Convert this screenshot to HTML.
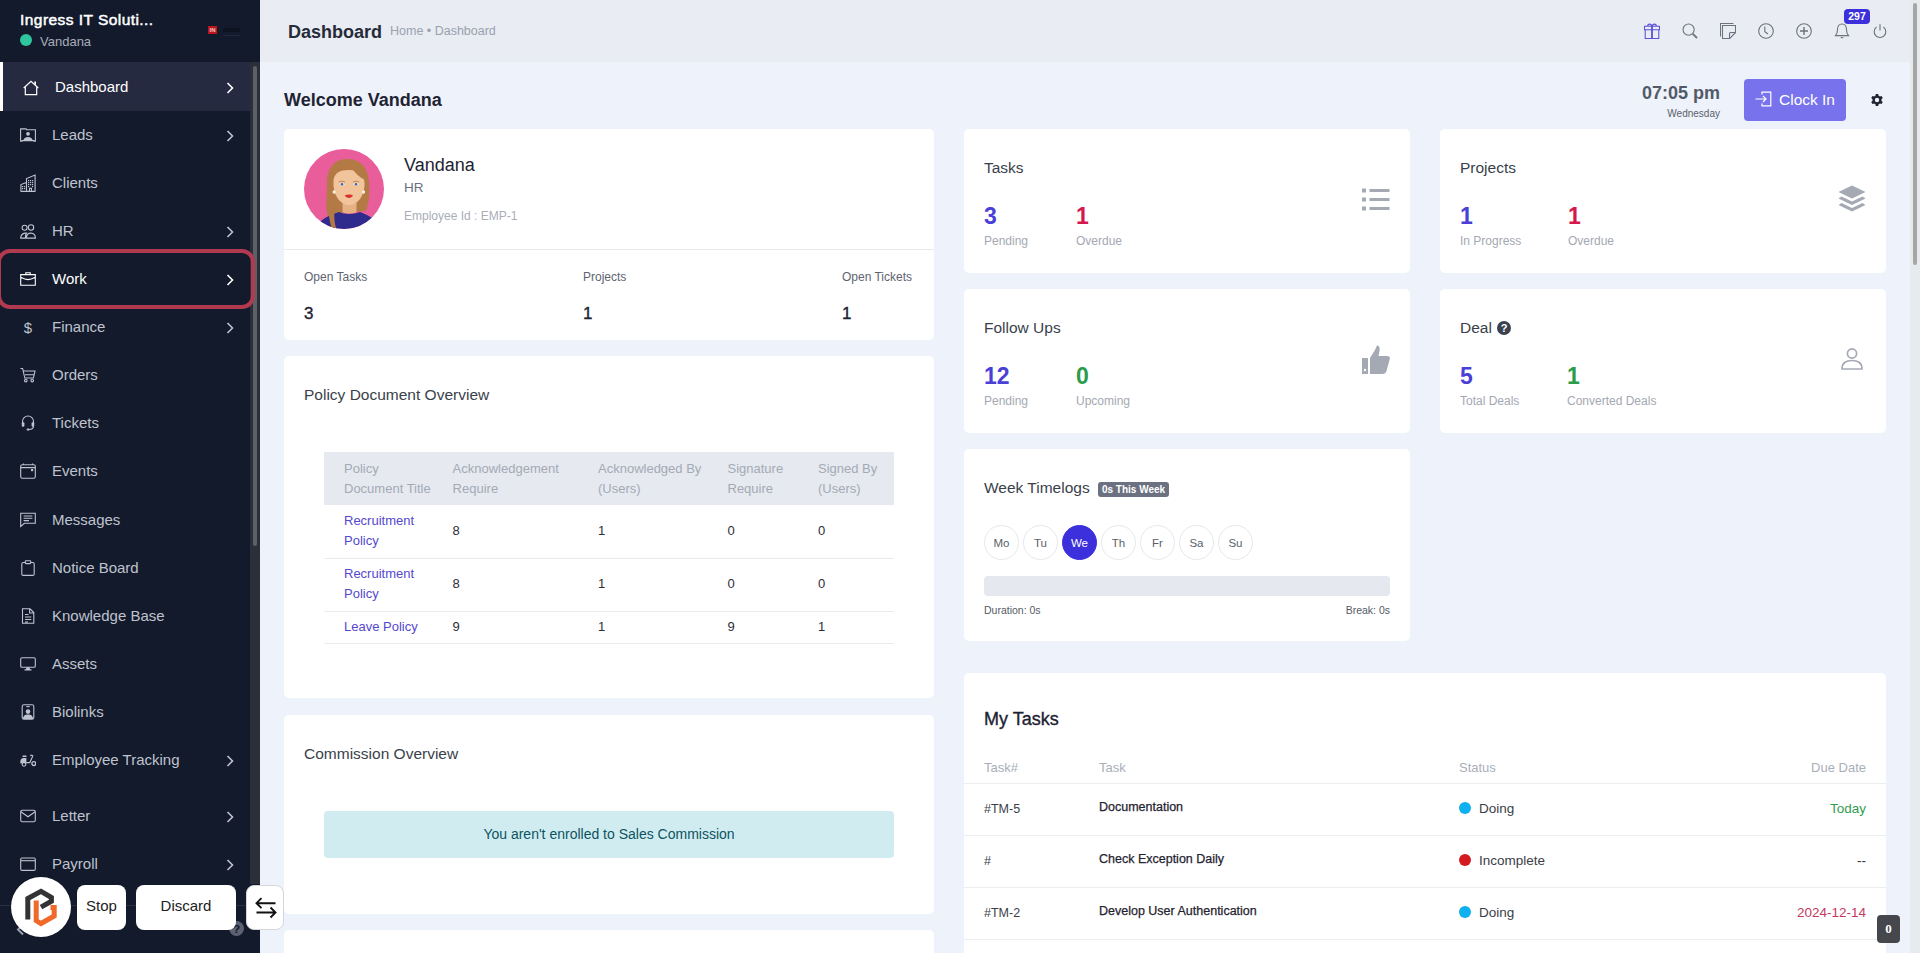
<!DOCTYPE html>
<html><head><meta charset="utf-8">
<style>
*{box-sizing:border-box;margin:0;padding:0}
html,body{width:1920px;height:953px;overflow:hidden}
body{font-family:"Liberation Sans",sans-serif;background:#eef2fb;position:relative;color:#28292f}
.abs{position:absolute}
#sb{position:absolute;left:0;top:0;width:260px;height:953px;background:#131a2b}
#sbtrack{position:absolute;left:250px;top:62px;width:10px;height:822px;background:#2b2f3a}
#sbthumb{position:absolute;left:253px;top:66px;width:4px;height:480px;background:#5d6066;border-radius:2px}
.mi{position:absolute;left:0;width:250px;height:48px;color:#bfc3cf;font-size:15px}
.mi .ic{position:absolute;left:20px;top:calc(50% + 1px);transform:translateY(-50%);width:16px;height:auto}
.mi .tx{position:absolute;left:52px;top:16px;line-height:18px}
.mi .ch{position:absolute;left:226px;top:20px}
.mi .ic svg{display:block}
.mi.act{background:#262a41;color:#fff;height:49px}
.mi.act::before{content:"";position:absolute;left:0;top:0;width:3px;height:100%;background:#fff}
.mi.act .tx{left:55px}
.mi.act .ic{left:23px}
.mi.wk{color:#fff}
#hdr{position:absolute;left:260px;top:0;width:1660px;height:62px;background:#e9ecf2}
.card{position:absolute;background:#fff;border-radius:5px}
#pscroll{position:absolute;left:1910px;top:0;width:10px;height:953px;background:#e7eaef}
#pthumb{position:absolute;left:1913px;top:3px;width:4px;height:262px;background:#a6a6a6;border-radius:2px}
.ttl{font-size:15.5px;color:#3a3f4b;line-height:18px;white-space:nowrap}
.th{font-size:13px;color:#a4a9b5;line-height:20px;white-space:nowrap}
.tl{font-size:13px;color:#5448d0;line-height:20px;white-space:nowrap}
.td{font-size:13px;color:#2a2e38;line-height:20px}
.num{font-size:23px;font-weight:bold;line-height:24px}
.lbl{font-size:12px;color:#a4a8b2;line-height:14px;white-space:nowrap}
.day{width:35px;height:35px;border-radius:50%;border:1px solid #e6e8ee;text-align:center;line-height:34px;font-size:11.5px;color:#5a5f6b}
.tkh{font-size:13px;color:#a9aeb9;line-height:16px}
.tkc{font-size:12.5px;color:#3a3e48;line-height:18px}
.tkn{font-size:12.5px;font-weight:500;color:#1f2330;-webkit-text-stroke:0.25px #1f2330;line-height:18px;white-space:nowrap}
.tks{font-size:13.5px;color:#3a3e48;line-height:18px;white-space:nowrap}
.btn{background:#fff;border-radius:8px;color:#222;font-size:15px;text-align:center;line-height:42px}
</style></head><body>
<div id="sb">
  <div class="abs" style="left:20px;top:10px;font-size:15.5px;color:#fff;line-height:20px;letter-spacing:0.45px;-webkit-text-stroke:0.5px #fff">Ingress IT Soluti...</div>
  <div class="abs" style="left:20px;top:34px;width:12px;height:12px;border-radius:50%;background:#2fc59f"></div>
  <div class="abs" style="left:40px;top:34px;font-size:13px;color:#a9adb9;line-height:16px">Vandana</div>
  <div class="mi act" style="top:62px"><span class="ic"><svg viewBox="0 0 16 16" width="16" height="16"><path fill="none" stroke="currentColor" stroke-width="1.2" d="M0.7 8 L8 1.2 L15.3 8 M2.3 6.6 V14.6 H13.7 V6.6"/><path fill="currentColor" d="M11.3 1.5 H13 V5.2 L11.3 3.7 Z"/></svg></span><span class="tx">Dashboard</span><svg class="ch" viewBox="0 0 8 12" width="8" height="12"><path d="M1.5 1 L6.5 6 L1.5 11" fill="none" stroke="currentColor" stroke-width="1.6"/></svg></div>
<div class="mi" style="top:110px"><span class="ic"><svg viewBox="0 0 16 14" width="16" height="14"><path fill="none" stroke="currentColor" stroke-width="1.1" d="M0.6 13.2 V0.9 H6 L6.6 1.7 H15.4 V13.2 H14 V12.6 H2 V13.2 Z"/><circle cx="8" cy="5.8" r="1.9" fill="currentColor"/><path fill="currentColor" d="M3.2 12.4 C4 9.8 6 9 8 9 C10 9 12 9.8 12.8 12.4 Z"/></svg></span><span class="tx">Leads</span><svg class="ch" viewBox="0 0 8 12" width="8" height="12"><path d="M1.5 1 L6.5 6 L1.5 11" fill="none" stroke="currentColor" stroke-width="1.6"/></svg></div>
<div class="mi" style="top:158px"><span class="ic"><svg viewBox="0 0 16 18" width="16" height="18"><path fill="none" stroke="currentColor" stroke-width="1.1" d="M0.6 17.4 H15.4 M0.9 17.4 V10.6 L6.5 8.6 M6.5 17.4 V4.6 L15.1 1 V17.4 M9.5 17.4 V14.4 H11.5 V17.4"/><g fill="currentColor"><rect x="2" y="12" width="1.2" height="1.2"/><rect x="4" y="12" width="1.2" height="1.2"/><rect x="2" y="14" width="1.2" height="1.2"/><rect x="4" y="14" width="1.2" height="1.2"/><rect x="8" y="6" width="1.2" height="1.2"/><rect x="10" y="6" width="1.2" height="1.2"/><rect x="12" y="6" width="1.2" height="1.2"/><rect x="8" y="8" width="1.2" height="1.2"/><rect x="10" y="8" width="1.2" height="1.2"/><rect x="12" y="8" width="1.2" height="1.2"/><rect x="8" y="10" width="1.2" height="1.2"/><rect x="10" y="10" width="1.2" height="1.2"/><rect x="12" y="10" width="1.2" height="1.2"/><rect x="8" y="12" width="1.2" height="1.2"/><rect x="12" y="12" width="1.2" height="1.2"/></g></svg></span><span class="tx">Clients</span></div>
<div class="mi" style="top:206px"><span class="ic"><svg viewBox="0 0 16 16" width="16" height="16" style="margin-top:1px"><circle fill="none" stroke="currentColor" stroke-width="1.1" cx="4.6" cy="4.2" r="2.5"/><circle fill="none" stroke="currentColor" stroke-width="1.1" cx="11" cy="4" r="2.7"/><path fill="none" stroke="currentColor" stroke-width="1.1" d="M0.7 14.6 C0.7 11.8 2.4 10 5.2 9.6 L6.4 9.6 C5.6 10.8 5.4 12.4 5.4 14.6 Z M6.4 14.6 H15.4 C15.4 11.6 13.5 9.6 11 9.6 C8.4 9.6 6.4 11.6 6.4 14.6 Z"/></svg></span><span class="tx">HR</span><svg class="ch" viewBox="0 0 8 12" width="8" height="12"><path d="M1.5 1 L6.5 6 L1.5 11" fill="none" stroke="currentColor" stroke-width="1.6"/></svg></div>
<div class="mi wk" style="top:254px"><span class="ic"><svg viewBox="0 0 16 14" width="16" height="14"><path fill="none" stroke="currentColor" stroke-width="1.1" d="M0.7 2.6 H15.3 V13.3 H0.7 Z M5.8 2.6 V0.8 H10.2 V2.6 M0.7 5.2 C4 7 6 7.6 8 7.6 C10 7.6 12 7 15.3 5.2"/></svg></span><span class="tx">Work</span><svg class="ch" viewBox="0 0 8 12" width="8" height="12"><path d="M1.5 1 L6.5 6 L1.5 11" fill="none" stroke="currentColor" stroke-width="1.6"/></svg></div>
<div class="mi" style="top:302px"><span class="ic"><svg viewBox="0 0 16 16" width="16" height="16"><text x="8" y="14" text-anchor="middle" font-family="Liberation Sans" font-size="15" fill="currentColor">$</text></svg></span><span class="tx">Finance</span><svg class="ch" viewBox="0 0 8 12" width="8" height="12"><path d="M1.5 1 L6.5 6 L1.5 11" fill="none" stroke="currentColor" stroke-width="1.6"/></svg></div>
<div class="mi" style="top:350px"><span class="ic"><svg viewBox="0 0 16 16" width="16" height="16"><path fill="none" stroke="currentColor" stroke-width="1.1" d="M0.5 1.5 H2.6 L4.8 11 H13.4 L15 4 H3.3 M5 7.8 H13.9"/><circle fill="none" stroke="currentColor" stroke-width="1.1" cx="5.8" cy="13.6" r="1.3"/><circle fill="none" stroke="currentColor" stroke-width="1.1" cx="12.2" cy="13.6" r="1.3"/></svg></span><span class="tx">Orders</span></div>
<div class="mi" style="top:398px"><span class="ic"><svg viewBox="0 0 16 16" width="16" height="16"><path fill="none" stroke="currentColor" stroke-width="1.1" d="M2.5 9 V6.5 C2.5 3.3 5 1 8 1 C11 1 13.5 3.3 13.5 6.5 V9 M13.5 11 C13.5 13.5 11.5 14.5 9 14.5"/><rect x="1.8" y="7.2" width="2.6" height="4.6" rx="1" fill="currentColor"/><rect x="11.6" y="7.2" width="2.6" height="4.6" rx="1" fill="currentColor"/><rect x="6.6" y="13.6" width="3" height="1.8" rx="0.9" fill="currentColor"/></svg></span><span class="tx">Tickets</span></div>
<div class="mi" style="top:446px"><span class="ic"><svg viewBox="0 0 16 16" width="16" height="16"><rect fill="none" stroke="currentColor" stroke-width="1.1" x="0.7" y="1.7" width="14.6" height="13.6" rx="1.6"/><path fill="none" stroke="currentColor" stroke-width="1.1" d="M0.7 4.6 H15.3 M3.5 0.5 V2 M12.5 0.5 V2"/><rect x="11" y="6" width="2.2" height="2.2" fill="currentColor"/></svg></span><span class="tx">Events</span></div>
<div class="mi" style="top:495px"><span class="ic"><svg viewBox="0 0 16 16" width="16" height="16"><path fill="none" stroke="currentColor" stroke-width="1.1" d="M0.7 1.2 H15.3 V11.3 H4.3 L0.7 14.6 Z M3.6 4 H12.4 M3.6 6.3 H12.4 M3.6 8.6 H9"/></svg></span><span class="tx">Messages</span></div>
<div class="mi" style="top:543px"><span class="ic"><svg viewBox="0 0 16 16" width="16" height="16"><path fill="none" stroke="currentColor" stroke-width="1.1" d="M5.2 2.5 H3.2 C2.4 2.5 1.8 3.1 1.8 3.9 V14 C1.8 14.8 2.4 15.4 3.2 15.4 H12.8 C13.6 15.4 14.2 14.8 14.2 14 V3.9 C14.2 3.1 13.6 2.5 12.8 2.5 H10.8"/><rect fill="none" stroke="currentColor" stroke-width="1.1" x="5.3" y="0.8" width="5.4" height="2.8" rx="0.6"/></svg></span><span class="tx">Notice Board</span></div>
<div class="mi" style="top:591px"><span class="ic"><svg viewBox="0 0 16 16" width="16" height="16"><path fill="none" stroke="currentColor" stroke-width="1.1" d="M2.5 0.8 H10 L13.8 4.6 V15.2 H2.5 Z M9.6 0.8 V5 H13.8 M5 6.5 H8.5 M5 9 H11.3 M5 11.5 H11.3 M5 14 H8"/></svg></span><span class="tx">Knowledge Base</span></div>
<div class="mi" style="top:639px"><span class="ic"><svg viewBox="0 0 16 14" width="16" height="14"><rect fill="none" stroke="currentColor" stroke-width="1.1" x="0.7" y="0.8" width="14.6" height="9.4" rx="1.3"/><path fill="currentColor" d="M6.5 10.2 H9.5 L10 12.2 H11.5 V13.4 H4.5 V12.2 H6 Z"/></svg></span><span class="tx">Assets</span></div>
<div class="mi" style="top:687px"><span class="ic"><svg viewBox="0 0 16 16" width="16" height="16"><rect fill="none" stroke="currentColor" stroke-width="1.1" x="2.2" y="0.7" width="11.6" height="14.6" rx="1.8"/><path fill="none" stroke="currentColor" stroke-width="1.1" d="M6.3 2.6 H9.7"/><circle cx="8" cy="7.6" r="2.3" fill="currentColor"/><path fill="currentColor" d="M3 15 C3.2 11.6 5 10.6 8 10.6 C11 10.6 12.8 11.6 13 15 Z"/></svg></span><span class="tx">Biolinks</span></div>
<div class="mi" style="top:735px"><span class="ic"><svg viewBox="0 0 16 16" width="16" height="16"><rect x="2.5" y="3.6" width="4" height="1.3" rx="0.5" fill="currentColor"/><path fill="currentColor" d="M0.2 11.2 C0.2 8.2 1 6.1 3.2 6.1 H6.4 V11.2 Z"/><path fill="none" stroke="currentColor" stroke-width="1.1" d="M6.2 10.6 H9.8 L12.7 4.2 C12.9 3.7 12.6 3.4 12.1 3.4 H10.2"/><circle fill="none" stroke="currentColor" stroke-width="1.1" cx="4" cy="12.3" r="1.9"/><circle fill="none" stroke="currentColor" stroke-width="1.3" cx="13.8" cy="11.6" r="1.9"/></svg></span><span class="tx">Employee Tracking</span><svg class="ch" viewBox="0 0 8 12" width="8" height="12"><path d="M1.5 1 L6.5 6 L1.5 11" fill="none" stroke="currentColor" stroke-width="1.6"/></svg></div>
<div class="mi" style="top:791px"><span class="ic"><svg viewBox="0 0 16 14" width="16" height="14"><rect fill="none" stroke="currentColor" stroke-width="1.1" x="0.7" y="1.2" width="14.6" height="11.6" rx="1.6"/><path fill="none" stroke="currentColor" stroke-width="1.1" d="M0.9 2.8 L8 7.8 L15.1 2.8"/></svg></span><span class="tx">Letter</span><svg class="ch" viewBox="0 0 8 12" width="8" height="12"><path d="M1.5 1 L6.5 6 L1.5 11" fill="none" stroke="currentColor" stroke-width="1.6"/></svg></div>
<div class="mi" style="top:839px"><span class="ic"><svg viewBox="0 0 16 14" width="16" height="14"><rect fill="none" stroke="currentColor" stroke-width="1.1" x="0.7" y="1" width="14.6" height="12.4" rx="1.4"/><path fill="none" stroke="currentColor" stroke-width="1.1" d="M0.7 3.7 H15.3"/></svg></span><span class="tx">Payroll</span><svg class="ch" viewBox="0 0 8 12" width="8" height="12"><path d="M1.5 1 L6.5 6 L1.5 11" fill="none" stroke="currentColor" stroke-width="1.6"/></svg></div>
  <div id="sbtrack"></div><div id="sbthumb"></div>
</div>
<!-- header -->
<div id="hdr">
  <div class="abs" style="left:28px;top:21px;font-size:18px;font-weight:bold;color:#262b3a;line-height:22px">Dashboard</div>
  <div class="abs" style="left:130px;top:23px;font-size:12.5px;color:#9aa1ae;line-height:16px">Home • Dashboard</div>
  <svg class="abs" style="left:1384px;top:23px" width="16" height="16" viewBox="0 0 16 16"><path fill="none" stroke="#5b50d6" stroke-width="1.05" d="M0.5 3.3 H15.5 V6.8 H0.5 Z M1.2 6.8 V15.4 H14.8 V6.8 M8 3.3 V15.4 M3.6 3.3 C3.6 0.4 7.6 0.4 7.6 3.3 M8.4 3.3 C8.4 0.4 12.4 0.4 12.4 3.3"/><path stroke="#5b50d6" stroke-width="1.6" d="M8 3.3 V15.4"/></svg><svg class="abs" style="left:1422px;top:23px" width="16" height="16" viewBox="0 0 16 16"><circle fill="none" stroke="#6c727e" stroke-width="1.1" cx="6.6" cy="6.6" r="5.6"/><path fill="none" stroke="#6c727e" stroke-width="1.8" d="M10.8 10.8 L15 15"/></svg><svg class="abs" style="left:1460px;top:23px" width="16" height="16" viewBox="0 0 16 16"><path fill="none" stroke="#6c727e" stroke-width="1.05" d="M0.5 13.5 V0.5 H13.5"/><path fill="none" stroke="#6c727e" stroke-width="1.05" d="M2.5 15.5 V2.5 H15.5 V9.5 L9.5 15.5 Z"/><path fill="#dfe6ee" stroke="#6c727e" stroke-width="1.05" d="M9.5 15.5 V10.5 C9.5 10 9.8 9.5 10.5 9.5 H15.5 Z"/></svg><svg class="abs" style="left:1498px;top:23px" width="16" height="16" viewBox="0 0 16 16"><circle fill="none" stroke="#6c727e" stroke-width="1.1" cx="8" cy="8" r="7.3"/><path fill="none" stroke="#6c727e" stroke-width="1.1" d="M6.8 3.6 V8.6 L10 11"/></svg><svg class="abs" style="left:1536px;top:23px" width="16" height="16" viewBox="0 0 16 16"><circle fill="none" stroke="#6c727e" stroke-width="1.1" cx="8" cy="8" r="7.3"/><path fill="none" stroke="#6c727e" stroke-width="1.4" d="M8 4 V12 M4 8 H12"/></svg><svg class="abs" style="left:1574px;top:23px" width="16" height="16" viewBox="0 0 16 16"><path fill="none" stroke="#6c727e" stroke-width="1.1" d="M8 1 C5 1 3.5 3.5 3.5 6.5 C3.5 10 2.5 11.5 1.5 12.6 H14.5 C13.5 11.5 12.5 10 12.5 6.5 C12.5 3.5 11 1 8 1 Z"/><path fill="#6c727e" d="M6.2 14 H9.8 L8 15.6 Z"/></svg><svg class="abs" style="left:1612px;top:23px" width="16" height="16" viewBox="0 0 16 16"><path fill="none" stroke="#6c727e" stroke-width="1.1" d="M8 1.2 V7.5 M4.6 4 A5.8 5.8 0 1 0 11.4 4"/></svg>
</div>
<div class="abs" style="left:1844px;top:9px;width:26px;height:15px;border-radius:4px;background:#3b30dc;color:#fff;font-size:10.5px;font-weight:bold;text-align:center;line-height:15px">297</div>
<!-- welcome row -->
<div class="abs" style="left:284px;top:90px;font-size:18px;font-weight:bold;color:#1f2433;line-height:20px">Welcome Vandana</div>
<div class="abs" style="left:1560px;top:83px;width:160px;text-align:right;font-size:18px;font-weight:bold;color:#525a68;line-height:20px">07:05 pm</div>
<div class="abs" style="left:1560px;top:108px;width:160px;text-align:right;font-size:10px;color:#5a5f6a;line-height:12px">Wednesday</div>
<div class="abs" style="left:1744px;top:79px;width:102px;height:42px;border-radius:4px;background:#7873ec;color:#fff;font-size:15.5px;line-height:42px">
  <svg class="abs" style="left:12px;top:12px;overflow:visible" width="16" height="16" viewBox="0 0 16 16"><path d="M6 3.5 V1.2 H14.8 V14.8 H6 V12.5" fill="none" stroke="#fff" stroke-width="1.2"/><path d="M-0.5 8 H10 M7 5 L10 8 L7 11" fill="none" stroke="#fff" stroke-width="1.2"/></svg>
  <span class="abs" style="left:35px;top:0">Clock In</span>
</div>
<svg class="abs" style="left:1870px;top:93px" width="14" height="14" viewBox="0 0 16 16"><path fill="#1f2433" d="M9.4 1.1 L9.8 3.1 A5.2 5.2 0 0 1 11.3 4 L13.2 3.3 L14.6 5.7 L13.1 7 A5.2 5.2 0 0 1 13.1 9 L14.6 10.3 L13.2 12.7 L11.3 12 A5.2 5.2 0 0 1 9.8 12.9 L9.4 14.9 H6.6 L6.2 12.9 A5.2 5.2 0 0 1 4.7 12 L2.8 12.7 L1.4 10.3 L2.9 9 A5.2 5.2 0 0 1 2.9 7 L1.4 5.7 L2.8 3.3 L4.7 4 A5.2 5.2 0 0 1 6.2 3.1 L6.6 1.1 Z M8 5.5 A2.5 2.5 0 1 0 8 10.5 A2.5 2.5 0 1 0 8 5.5 Z" fill-rule="evenodd"/></svg>

<!-- profile card -->
<div class="card" style="left:284px;top:129px;width:650px;height:211px">
  <svg class="abs" style="left:20px;top:20px" width="80" height="80" viewBox="0 0 80 80">
    <defs><clipPath id="cc"><circle cx="40" cy="40" r="40"/></clipPath></defs>
    <circle cx="40" cy="40" r="40" fill="#e95d9b"/>
    <g clip-path="url(#cc)">
      <path fill="#b47a45" d="M43 10 C29 10 22 22 23 36 C23 48 21 58 24 68 C26 75 27 79 29 82 L35 82 L34 64 L62 62 C65 54 66 44 65 33 C64 19 57 10 43 10 Z"/>
      <path fill="#e6b085" d="M38.5 50 H52.5 V63 C49 65 42 65 38.5 63 Z"/>
      <path fill="#f2c49c" d="M29.5 32 C29.5 24 36 21 45 21 C54 21 60.5 25 60.5 35 C60.5 46 54 56 45 56 C36 56 29.5 46 29.5 35 Z"/>
      <path fill="#b47a45" d="M28.5 34 C30 22 38 17 47 18 C51 24 56 29 61.5 31 L62 24 C57 13 38 11 30 20 C28 24 27.5 30 28.5 34 Z"/>
      <path fill="#fff" d="M35.2 35.3 C36.5 33.8 39.5 33.8 40.8 35.3 C39.5 36.8 36.5 36.8 35.2 35.3 Z M49.2 35.3 C50.5 33.8 53.5 33.8 54.8 35.3 C53.5 36.8 50.5 36.8 49.2 35.3 Z"/>
      <circle cx="38" cy="35.3" r="1.3" fill="#3d62a8"/><circle cx="52" cy="35.3" r="1.3" fill="#3d62a8"/>
      <path d="M34.8 33 C36.5 32 39 32 41 33 M49 33 C51 32 53.5 32 55.2 33" stroke="#a0683a" stroke-width="0.7" fill="none"/>
      <path fill="#d9312f" d="M40.8 46.3 C43 45.3 47 45.3 49 46.3 C47.5 49.8 42.5 49.8 40.8 46.3 Z"/>
      <circle cx="30.2" cy="43" r="1.7" fill="#f6efd8"/><circle cx="59.5" cy="43" r="1.7" fill="#f6efd8"/>
      <path fill="#2e2b8c" d="M13 82 C14 72 20 68 35 63 C40 65.5 50 65.5 56 63 C67 67 73 71 75 82 Z"/>
      <path fill="#b47a45" d="M24 58 C25 68 26 75 29 82 L33 82 C30 74 30 66 30.5 58 Z"/>
    </g>
  </svg>
  <div class="abs" style="left:120px;top:26px;font-size:18px;font-weight:500;color:#1d2233;line-height:20px">Vandana</div>
  <div class="abs" style="left:120px;top:51px;font-size:13.5px;color:#6a7080;line-height:16px">HR</div>
  <div class="abs" style="left:120px;top:80px;font-size:12px;color:#a9adb8;line-height:14px">Employee Id : EMP-1</div>
  <div class="abs" style="left:0;top:120px;width:650px;height:1px;background:#e8eaef"></div>
  <div class="abs" style="left:20px;top:141px;font-size:12px;color:#5e6470;line-height:14px">Open Tasks</div>
  <div class="abs" style="left:20px;top:175px;font-size:17px;-webkit-text-stroke:0.35px #1d2233;color:#1d2233;line-height:20px">3</div>
  <div class="abs" style="left:299px;top:141px;font-size:12px;color:#5e6470;line-height:14px">Projects</div>
  <div class="abs" style="left:299px;top:175px;font-size:17px;-webkit-text-stroke:0.35px #1d2233;color:#1d2233;line-height:20px">1</div>
  <div class="abs" style="left:558px;top:141px;font-size:12px;color:#5e6470;line-height:14px">Open Tickets</div>
  <div class="abs" style="left:558px;top:175px;font-size:17px;-webkit-text-stroke:0.35px #1d2233;color:#1d2233;line-height:20px">1</div>
</div>

<!-- policy card -->
<div class="card" style="left:284px;top:356px;width:650px;height:342px">
  <div class="abs ttl" style="left:20px;top:30px">Policy Document Overview</div>
  <div class="abs" style="left:40px;top:96px;width:570px;height:53px;background:#e6e9f0"></div>
  <div class="abs th" style="left:60px;top:103px">Policy<br>Document Title</div>
<div class="abs th" style="left:168.6px;top:103px">Acknowledgement<br>Require</div>
<div class="abs th" style="left:314px;top:103px">Acknowledged By<br>(Users)</div>
<div class="abs th" style="left:443.5px;top:103px">Signature<br>Require</div>
<div class="abs th" style="left:534px;top:103px">Signed By<br>(Users)</div>
<div class="abs tl" style="left:60px;top:154.7px">Recruitment<br>Policy</div>
<div class="abs td" style="left:168.6px;top:164.7px">8</div>
<div class="abs td" style="left:314px;top:164.7px">1</div>
<div class="abs td" style="left:443.5px;top:164.7px">0</div>
<div class="abs td" style="left:534px;top:164.7px">0</div>
<div class="abs" style="left:40px;top:202px;width:570px;height:1px;background:#e9ebf0"></div>
<div class="abs tl" style="left:60px;top:208.4px">Recruitment<br>Policy</div>
<div class="abs td" style="left:168.6px;top:218.4px">8</div>
<div class="abs td" style="left:314px;top:218.4px">1</div>
<div class="abs td" style="left:443.5px;top:218.4px">0</div>
<div class="abs td" style="left:534px;top:218.4px">0</div>
<div class="abs" style="left:40px;top:255px;width:570px;height:1px;background:#e9ebf0"></div>
<div class="abs tl" style="left:60px;top:261.4px">Leave Policy</div>
<div class="abs td" style="left:168.6px;top:261.4px">9</div>
<div class="abs td" style="left:314px;top:261.4px">1</div>
<div class="abs td" style="left:443.5px;top:261.4px">9</div>
<div class="abs td" style="left:534px;top:261.4px">1</div>
<div class="abs" style="left:40px;top:287px;width:570px;height:1px;background:#e9ebf0"></div>
</div>

<!-- commission card -->
<div class="card" style="left:284px;top:715px;width:650px;height:199px">
  <div class="abs ttl" style="left:20px;top:30px">Commission Overview</div>
  <div class="abs" style="left:40px;top:96px;width:570px;height:47px;background:#d1ecf1;border-radius:4px;color:#0c5460;font-size:14px;text-align:center;line-height:46px">You aren't enrolled to Sales Commission</div>
</div>
<div class="card" style="left:284px;top:930px;width:650px;height:40px"></div>

<!-- stat cards -->
<div class="card" style="left:964px;top:129px;width:446px;height:144px">
  <div class="abs ttl" style="left:20px;top:30px">Tasks</div>
  <div class="abs num" style="left:20px;top:75px;color:#4a3fd6">3</div>
  <div class="abs lbl" style="left:20px;top:105px">Pending</div>
  <div class="abs num" style="left:112px;top:75px;color:#d6174d">1</div>
  <div class="abs lbl" style="left:112px;top:105px">Overdue</div>
  <svg class="abs" style="left:398px;top:59px" width="28" height="23" viewBox="0 0 28 23"><g fill="#a5a9b4"><rect x="0" y="0.5" width="4" height="4"/><rect x="0" y="9.5" width="4" height="4"/><rect x="0" y="18.5" width="4" height="4"/><rect x="7.5" y="1" width="20" height="3"/><rect x="7.5" y="10" width="20" height="3"/><rect x="7.5" y="19" width="20" height="3"/></g></svg>
</div>
<div class="card" style="left:1440px;top:129px;width:446px;height:144px">
  <div class="abs ttl" style="left:20px;top:30px">Projects</div>
  <div class="abs num" style="left:20px;top:75px;color:#4a3fd6">1</div>
  <div class="abs lbl" style="left:20px;top:105px">In Progress</div>
  <div class="abs num" style="left:128px;top:75px;color:#d6174d">1</div>
  <div class="abs lbl" style="left:128px;top:105px">Overdue</div>
  <svg class="abs" style="left:398px;top:56px" width="28" height="28" viewBox="0 0 28 28"><g fill="#a5a9b4"><path d="M14 0.5 L27.5 7 L14 13.5 L0.5 7 Z"/><path d="M3.5 11.5 L14 16.5 L24.5 11.5 L27.5 13.5 L14 20 L0.5 13.5 Z"/><path d="M3.5 18 L14 23 L24.5 18 L27.5 20 L14 26.5 L0.5 20 Z"/></g></svg>
</div>
<div class="card" style="left:964px;top:289px;width:446px;height:144px">
  <div class="abs ttl" style="left:20px;top:30px">Follow Ups</div>
  <div class="abs num" style="left:20px;top:75px;color:#4a3fd6">12</div>
  <div class="abs lbl" style="left:20px;top:105px">Pending</div>
  <div class="abs num" style="left:112px;top:75px;color:#2a9c4a">0</div>
  <div class="abs lbl" style="left:112px;top:105px">Upcoming</div>
  <svg class="abs" style="left:398px;top:56px" width="28" height="29" viewBox="0 0 28 29"><g fill="#a5a9b4"><rect x="0" y="13" width="6" height="16"/><path d="M8 13 L13 5 C14 3 14.5 1.5 15 0.5 C17.5 0.5 18 3 17.5 6 L16.5 11 H25.5 C27.5 11 28.5 13 27.5 15 L24.5 26 C24 28 22.5 29 20.5 29 H8 Z"/></g><circle cx="3" cy="25" r="1.2" fill="#fff"/></svg>
</div>
<div class="card" style="left:1440px;top:289px;width:446px;height:144px">
  <div class="abs ttl" style="left:20px;top:30px">Deal<svg style="display:inline-block;vertical-align:-2px;margin-left:5px" width="14" height="14" viewBox="0 0 14 14"><circle cx="7" cy="7" r="7" fill="#3c4150"/><text x="7" y="11" text-anchor="middle" font-family="Liberation Sans" font-weight="bold" font-size="11" fill="#fff">?</text></svg></div>
  <div class="abs num" style="left:20px;top:75px;color:#4a3fd6">5</div>
  <div class="abs lbl" style="left:20px;top:105px">Total Deals</div>
  <div class="abs num" style="left:127px;top:75px;color:#2a9c4a">1</div>
  <div class="abs lbl" style="left:127px;top:105px">Converted Deals</div>
  <svg class="abs" style="left:401px;top:59px" width="22" height="22" viewBox="0 0 22 22"><circle cx="11" cy="5.5" r="4.6" fill="none" stroke="#a5a9b4" stroke-width="1.7"/><path d="M1 21 C1 15 5 12.5 11 12.5 C17 12.5 21 15 21 21 Z" fill="none" stroke="#a5a9b4" stroke-width="1.7" stroke-linejoin="round"/></svg>
</div>

<!-- week timelogs -->
<div class="card" style="left:964px;top:449px;width:446px;height:192px">
  <div class="abs ttl" style="left:20px;top:30px">Week Timelogs</div>
  <div class="abs" style="left:134px;top:33px;width:71px;height:15px;border-radius:3px;background:#6b7180;color:#fff;font-size:10px;font-weight:bold;text-align:center;line-height:15px">0s This Week</div>
  <div class="abs day" style="left:20px;top:76px">Mo</div>
<div class="abs day" style="left:59px;top:76px">Tu</div>
<div class="abs day" style="left:98px;top:76px;background:#3c2fdc;border-color:#3c2fdc;color:#fff">We</div>
<div class="abs day" style="left:137px;top:76px">Th</div>
<div class="abs day" style="left:176px;top:76px">Fr</div>
<div class="abs day" style="left:215px;top:76px">Sa</div>
<div class="abs day" style="left:254px;top:76px">Su</div>
  <div class="abs" style="left:20px;top:127px;width:406px;height:20px;border-radius:4px;background:#e5e8ee"></div>
  <div class="abs" style="left:20px;top:155px;font-size:10.5px;color:#555b66;line-height:13px">Duration: 0s</div>
  <div class="abs" style="left:226px;top:155px;width:200px;text-align:right;font-size:10.5px;color:#555b66;line-height:13px">Break: 0s</div>
</div>

<!-- my tasks -->
<div class="card" style="left:964px;top:673px;width:922px;height:300px">
  <div class="abs" style="left:20px;top:35px;font-size:18px;font-weight:500;color:#1d2233;line-height:22px;-webkit-text-stroke:0.35px #1d2233">My Tasks</div>
  <div class="abs tkh" style="left:20px;top:87px">Task#</div><div class="abs tkh" style="left:135px;top:87px">Task</div><div class="abs tkh" style="left:495px;top:87px">Status</div><div class="abs tkh" style="left:702px;top:87px;width:200px;text-align:right">Due Date</div>
<div class="abs" style="left:0;top:110px;width:922px;height:1px;background:#eceef2"></div>
<div class="abs tkc" style="left:20px;top:126.6px">#TM-5</div>
<div class="abs tkn" style="left:135px;top:124.6px">Documentation</div>
<div class="abs" style="left:495px;top:129.1px;width:12px;height:12px;border-radius:50%;background:#0fb0f0"></div>
<div class="abs tks" style="left:515px;top:126.6px">Doing</div>
<div class="abs tks" style="left:702px;top:126.6px;width:200px;text-align:right;color:#2f9e4f">Today</div>
<div class="abs" style="left:0;top:161.6px;width:922px;height:1px;background:#eceef2"></div>
<div class="abs tkc" style="left:20px;top:178.6px">#</div>
<div class="abs tkn" style="left:135px;top:176.6px">Check Exception Daily</div>
<div class="abs" style="left:495px;top:181.1px;width:12px;height:12px;border-radius:50%;background:#d41a1f"></div>
<div class="abs tks" style="left:515px;top:178.6px">Incomplete</div>
<div class="abs tks" style="left:702px;top:178.6px;width:200px;text-align:right;color:#333">--</div>
<div class="abs" style="left:0;top:213.6px;width:922px;height:1px;background:#eceef2"></div>
<div class="abs tkc" style="left:20px;top:230.6px">#TM-2</div>
<div class="abs tkn" style="left:135px;top:228.6px">Develop User Authentication</div>
<div class="abs" style="left:495px;top:233.1px;width:12px;height:12px;border-radius:50%;background:#0fb0f0"></div>
<div class="abs tks" style="left:515px;top:230.6px">Doing</div>
<div class="abs tks" style="left:702px;top:230.6px;width:200px;text-align:right;color:#c23a60">2024-12-14</div>
<div class="abs" style="left:0;top:265.6px;width:922px;height:1px;background:#eceef2"></div>
</div>
<div class="abs" style="left:1877px;top:915px;width:23px;height:28px;border-radius:4px;background:#45474c;color:#fff;font-family:'Liberation Serif',serif;font-size:13px;font-weight:bold;text-align:center;line-height:28px">0</div>

<!-- sidebar extras -->
<div class="abs" style="left:-3px;top:249px;width:258px;height:60px;border:4px solid #b13a51;border-radius:13px"></div>
<div class="abs" style="left:0;top:905px;width:250px;height:1px;background:#2a3040"></div>
<svg class="abs" style="left:16px;top:923px" width="9" height="13" viewBox="0 0 9 13"><path d="M7 1.5 L2 6.5 L7 11.5" fill="none" stroke="#9a9fae" stroke-width="2"/></svg>
<svg class="abs" style="left:229px;top:921px" width="15" height="15" viewBox="0 0 14 14"><circle cx="7" cy="7" r="7" fill="#5d6272"/><text x="7" y="11" text-anchor="middle" font-family="Liberation Sans" font-weight="bold" font-size="11" fill="#131a2b">?</text></svg>
<!-- IN logo -->
<div class="abs" style="left:208px;top:26px;width:9px;height:8px;background:#b8141a;color:#f7c5c5;font-size:6px;font-weight:bold;line-height:8px;text-align:center">IN</div>
<div class="abs" style="left:223px;top:28px;width:17px;height:4px;background:#0e1322"></div><div class="abs" style="left:223px;top:35px;width:17px;height:1px;background:#20263a"></div>
<!-- overlay -->
<div class="abs" style="left:11px;top:877px;width:60px;height:60px;border-radius:50%;background:#fff;box-shadow:0 0 2px rgba(0,0,0,.2)">
  <svg class="abs" style="left:0;top:0" width="60" height="60" viewBox="0 0 60 60"><path d="M16.8 42.5 V21.5 L30 14.3 L40.4 20.5 V24.2 L30 30.2" fill="none" stroke="#333336" stroke-width="5" stroke-linejoin="miter"/><path d="M25.2 23.5 V43.5 L30 46.5 L43.2 39 V30.5 L39.5 30.5" fill="none" stroke="#f0692a" stroke-width="5" stroke-linejoin="miter"/></svg>
</div>
<div class="abs btn" style="left:77px;top:885px;width:49px;height:45px">Stop</div>
<div class="abs btn" style="left:136px;top:885px;width:100px;height:45px">Discard</div>
<div class="abs btn" style="left:246px;top:885px;width:38px;height:45px;border:1px solid #d4d6db">
  <svg class="abs" style="left:8px;top:11px" width="22" height="22" viewBox="0 0 22 22"><path d="M1.5 6.2 H20.5 M6.5 1.2 L1.5 6.2 L6.5 11.2 M1.5 15.5 H20.5 M15.5 10.5 L20.5 15.5 L15.5 20.5" fill="none" stroke="#111" stroke-width="1.9"/></svg>
</div>

<div id="pscroll"></div><div id="pthumb"></div>
</body></html>
